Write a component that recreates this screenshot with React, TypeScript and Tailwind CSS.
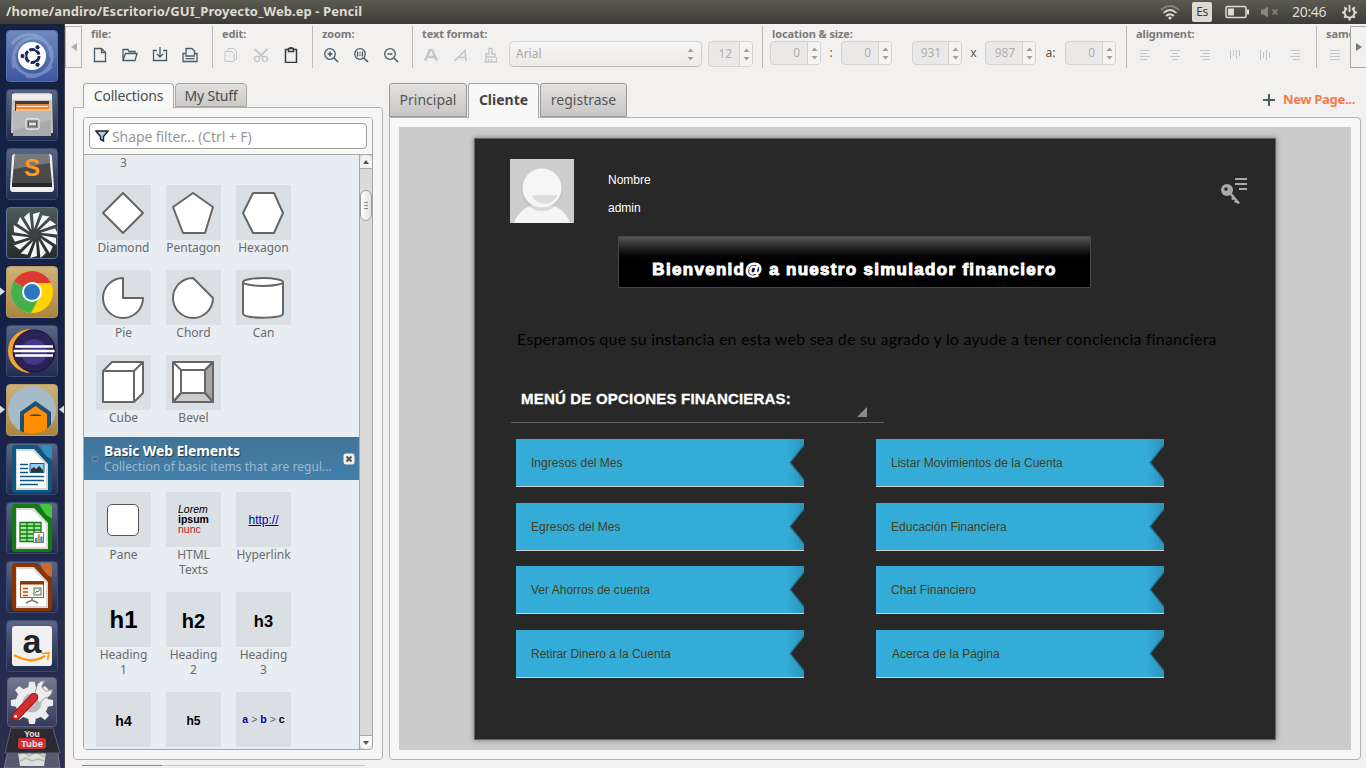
import type { ReactNode } from "react";

/* ---------- launcher ---------- */

function Tile({ tone = "dark", children }: { tone?: "dark" | "gold" | "blue" | "moss"; children: ReactNode }) {
  const tones = {
    dark: "from-[#5a6686] to-[#232c4c] border-[#3a4a73]",
    gold: "from-[#cbb27a] to-[#a9863f] border-[#b79a5d]",
    blue: "from-[#6f88bd] to-[#3d57a0] border-[#5870ad]",
    moss: "from-[#4c5c5c] to-[#262a2b] border-[#5c7593]",
  };
  return (
    <div className={"h-[52px] w-[52px] shrink-0 overflow-hidden rounded-[4px] border bg-linear-to-b " + tones[tone]}>
      <svg viewBox="1 1 50 50" className="block h-[50px] w-[50px]">{children}</svg>
    </div>
  );
}

function Office({ dark, light, children }: { dark: string; light: string; children: ReactNode }) {
  return (
    <>
      <path d="M6 5q0-3 3-3h22l15 16v29q0 3-3 3H9q-3 0-3-3z" fill={dark} />
      <path d="M10 6h18l14 15v26H10z" fill="#d8d8d8" />
      <path d="M11 8h16l13 14v23H11z" fill="#fff" />
      <path d="M34 2h9q3 0 3 3v11q-7-1-12-14z" fill={light} />
      {children}
    </>
  );
}

function Launcher() {
  const petals = Array.from({ length: 14 }, (_, i) => i * 25.7);
  const teeth = Array.from({ length: 8 }, (_, i) => i * 45);
  return (
    <nav className="relative flex h-[744px] w-[65px] shrink-0 flex-col gap-[7px] overflow-hidden border-r border-[#46414a] bg-linear-to-b from-[#16213f] via-[#15224a] to-[#2c2f4e] pl-[6px] pt-[6px]">
      <Tile tone="blue">
        <path d="M8 38C2 16 24-2 42 14M44 16c8 18-8 34-24 30M6 14C20-4 46 6 45 28M46 36C32 52 8 46 8 26" fill="none" stroke="#a9badd" strokeWidth="3" opacity=".45" />
        <circle cx="26" cy="26" r="14" fill="#fff" />
        <circle cx="26.500" cy="26" r="6.600" fill="none" stroke="#1c2b57" strokeWidth="3" strokeDasharray="12.200 1.600" />
        <g fill="#1c2b57" stroke="#fff" strokeWidth="1"><circle cx="16.500" cy="26" r="2.600" /><circle cx="31.500" cy="17.300" r="2.600" /><circle cx="31.500" cy="34.700" r="2.600" /></g>
      </Tile>
      <Tile>
        <path d="M6 6q1-2 3-2h34q2 0 3 2l1 38H5z" fill="#c9c9c8" />
        <path d="M6 5h40v6H6z" fill="#ebebea" />
        <path d="M9 12h34v14H9z" fill="#3b3b3b" />
        <path d="M10 15h33v12H10z" fill="#ee8536" /><path d="M11 17.500h31M10 21h33" stroke="#fff0dc" strokeWidth="1" />
        <path d="M7 22h38v25H7z" fill="#a9aaab" /><path d="M7 22h38v9L7 41z" fill="#b8b9ba" />
        <rect x="20" y="30" width="13" height="10" rx="2" fill="#8d8e8f" stroke="#e7e7e7" strokeWidth="1.300" />
        <rect x="22.500" y="33" width="8" height="4" fill="#e1e1e1" stroke="#555" />
      </Tile>
      <Tile>
        <path d="M6 9q0-3 3-3h34q3 0 3 3l2 31q0 4-3 4H7q-3 0-3-4z" fill="#eee" />
        <path d="M9 6h34l3 29H6z" fill="#4a4a4b" />
        <path d="M6 35h40v4H6z" fill="#262626" />
        <path d="M9 6h34l1 9-36 6z" fill="#77787a" />
        <text x="26" y="28" textAnchor="middle" fontFamily="Liberation Sans" fontWeight="700" fontSize="24" fill="#ff9820">S</text>
      </Tile>
      <Tile tone="moss">
        {petals.map((a) => (
          <path key={a} transform={"rotate(" + a + " 29 28)"} d="M28 22L27 7l7-2z" fill="#f6f6f6" />
        ))}
        <circle cx="29" cy="28" r="4.500" fill="#3d4343" />
      </Tile>
      <Tile tone="gold">
        <circle cx="26" cy="26" r="21" fill="#ffd400" />
        <path d="M26 26L7.800 15.500A21 21 0 0 1 45 17H26z" fill="#dd3a31" />
        <path d="M7.800 15.500A21 21 0 0 0 25 47l9-17-8-4z" fill="#43b04a" />
        <circle cx="26" cy="26" r="10" fill="#fff" /><circle cx="26" cy="26" r="8" fill="#2f77bd" />
      </Tile>
      <Tile>
        <path d="M24 4A22 22 0 0 0 24 48A25 25 0 0 1 24 4z" fill="#f6a233" />
        <circle cx="28" cy="26" r="21" fill="#2b2258" stroke="#15152c" />
        <circle cx="28" cy="27" r="13" fill="#443787" />
        <path d="M9 21.500h38M7.500 26h41M9 30.500h38" stroke="#fff" strokeWidth="2.400" />
      </Tile>
      <Tile tone="gold">
        <clipPath id="pencil-disc"><circle cx="26" cy="26" r="24" /></clipPath>
        <circle cx="26" cy="26" r="24" fill="#a6bac7" />
        <g clipPath="url(#pencil-disc)">
          <path d="M14 52V28l15.500-11L45 28v24z" fill="#1f4f71" />
          <path d="M18 52V30l11.500-8L41 30v22z" fill="#ff8f00" />
          <path d="M24 31q5.500-1.500 11 0v.9H24z" fill="#1f4f71" />
        </g>
      </Tile>
      <Tile>
        <Office dark="#0f5780" light="#2f8dbf">
          <path d="M14 21.500h8M14 25.500h8M14 29.500h8M14 33.500h24M14 37.500h24M14 41.500h18" stroke="#0f5780" strokeWidth="1.700" />
          <path d="M24 20.500h14v9H24z" fill="#8fd0f5" stroke="#0f5780" /><path d="M25 29v-3l3-2 2 2 3-3 4 4v2z" fill="#333" />
        </Office>
      </Tile>
      <Tile>
        <Office dark="#127c12" light="#46c43c">
          <path d="M14 20.500h21v19H14z" fill="#a5e59c" /><path d="M14 20.500h21v19H14zM14 24h21M14 28h21M14 32h21M14 36h21M21 20.500v19M28 20.500v19" fill="none" stroke="#127c12" strokeWidth="1.300" />
          <rect x="27.500" y="30.500" width="10" height="10" fill="#fff" stroke="#777" /><path d="M29 36h2.300v4H29z" fill="#2c8fd0" /><path d="M31.600 32.500h2.300V40h-2.300z" fill="#ef8a20" /><path d="M34.300 34.500h2.300V40h-2.300z" fill="#2c8fd0" />
        </Office>
      </Tile>
      <Tile>
        <Office dark="#8a3305" light="#c86a34">
          <rect x="14.500" y="20.500" width="23" height="16" fill="#fff6ee" stroke="#b25020" /><path d="M14 22h24" stroke="#8a3305" strokeWidth="3" />
          <path d="M17 27.500h5M17 31h5M17 34.500h5" stroke="#b25020" strokeWidth="1.600" /><rect x="28" y="27" width="7" height="7" fill="#e7ffe4" stroke="#666" /><path d="M29 32l2-2 1 1 2-3" fill="none" stroke="#2ba22b" />
          <path d="M26 37v3M20 42l6-3 6 3" fill="none" stroke="#777" strokeWidth="1.500" />
        </Office>
      </Tile>
      <Tile>
        <rect x="6" y="6" width="40" height="40" rx="3" fill="#f0f0f0" />
        <text x="26" y="33" textAnchor="middle" fontFamily="Liberation Sans" fontWeight="700" fontSize="34" fill="#222">a</text>
        <path d="M8 35q17 10 31 1" fill="none" stroke="#ff9a12" strokeWidth="2.600" /><path d="M36 33.500l7-.5-1.500 7" fill="none" stroke="#ff9a12" strokeWidth="1.700" />
      </Tile>
      <div className="-mt-[2px] ml-px h-[50px] w-[50px] shrink-0 rounded-[4px] border border-[#596180] bg-linear-to-b from-[#747b93] to-[#343a58]">
        <svg viewBox="0 0 50 50" className="block h-[48px] w-[48px]">
          <g fill="#ececec"><circle cx="25" cy="26" r="17" />
            {teeth.map((a) => <path key={a} transform={"rotate(" + a + " 25 26)"} d="M21 10l1-6h6l1 6z" />)}
          </g>
          <circle cx="25" cy="26" r="10" fill="#b9bac0" />
          <path d="M31 16L35 20" stroke="#ddd" strokeWidth="8" />
          <path d="M30 9q1-6 8-6l-3 6 4 5 7-2q0 8-8 9l-5 5-6-6z" fill="#eee" stroke="#999" />
          <path d="M8 40L27 20" stroke="#8f1518" strokeWidth="9" strokeLinecap="round" /><path d="M8 40L27 20" stroke="#d42d30" strokeWidth="7" strokeLinecap="round" /><circle cx="8" cy="40" r="1.500" fill="#fff" />
        </svg>
      </div>
      <svg viewBox="0 0 65 48" className="absolute bottom-0 left-0 h-12 w-[65px]">
        <path d="M9 27h48l3 21H4z" fill="#565a70" stroke="#747a92" />
        <path d="M18 32h28l-2 14H20z" fill="#e0e0dc" /><path d="M18 35l6-3 5 4 7-4 9 5M20 41l6-3 6 3 6-2 7 2" fill="none" stroke="#b5b5b1" strokeWidth="1.500" />
        <path d="M11 8h42l7 25H5z" fill="#2c2a31" stroke="#5e5f6d" />
        <rect x="18" y="18" width="28" height="11" rx="3" fill="#cf3035" />
        <text x="32" y="17" textAnchor="middle" fontFamily="Liberation Sans" fontWeight="700" fontSize="8.500" fill="#e8e8e8">You</text>
        <text x="32" y="27" textAnchor="middle" fontFamily="Liberation Sans" fontWeight="700" fontSize="9.500" fill="#f1e4e4">Tube</text>
      </svg>
      <svg viewBox="0 0 65 744" className="absolute inset-0 h-[744px] w-[65px]" fill="#dcdcdc">
        <path d="M0 263.500l5 4-5 4zM0 381.500l5 4-5 4zM64 381.500l-5 4 5 4z" />
      </svg>
    </nav>
  );
}

/* ---------- top panel ---------- */

function TitleBar() {
  return (
    <header className="flex h-6 items-center bg-linear-to-b from-[#5c5b50] to-[#3c3b37] pl-[6px] pr-[8px] text-[#dfdbd2]">
      <div className="text-[13px] font-bold tracking-[0.08px]">/home/andiro/Escritorio/GUI_Proyecto_Web.ep - Pencil</div>
      <svg className="ml-auto h-4 w-5" viewBox="0 0 20 16" fill="none" strokeWidth="1.700">
        <path d="M1 6q9-8 18 0" stroke="#858379" /><path d="M3.500 9q6.500-6 13 0M6 12q4-3.500 8 0" stroke="#dfdbd2" /><circle cx="10" cy="14" r="1.600" fill="#dfdbd2" />
      </svg>
      <div className="ml-[12px] flex h-5 w-5 items-center justify-center rounded-[2px] bg-[#dfdbd2] text-[12px] tracking-[-0.5px] text-[#3c3b37]">Es</div>
      <svg className="ml-[13px] h-4 w-6" viewBox="0 0 24 16"><rect x="1" y="2.500" width="20" height="11" rx="1.500" fill="none" stroke="#dfdbd2" strokeWidth="1.500" /><path d="M3 4.500h6v7H3z" fill="#dfdbd2" /><path d="M22 5.500h2v5h-2z" fill="#dfdbd2" /></svg>
      <svg className="ml-[12px] h-4 w-[18px]" viewBox="0 0 18 16"><path d="M0 5.500h2.500L7 2.500v11L2.500 10.500H0z" fill="#88867d" /><path d="M11.500 5.500l5 5M16.500 5.500l-5 5" stroke="#88867d" strokeWidth="1.700" /></svg>
      <div className="ml-[13px] w-[37px] text-[14px] leading-6 tracking-[-0.3px]">20:46</div>
      <svg className="ml-[12px] h-[17px] w-[17px]" viewBox="0 0 17 17" fill="none" stroke="#dfdbd2">
        <path d="M8.500 1v7" strokeWidth="1.800" /><path d="M6 4.300a5 5 0 1 0 5 0" strokeWidth="2" />
        <path d="M1 8.500h2.500M13.500 8.500H16M3.200 3.200l1.700 1.700M13.800 3.200l-1.700 1.700M3.200 13.800l1.700-1.700M13.800 13.800l-1.700-1.700M8.500 14v2.500" strokeWidth="2" />
      </svg>
    </header>
  );
}

/* ---------- toolbar ---------- */

function Group({ label, className, children }: { label: string; className: string; children: ReactNode }) {
  return (
    <section className={"h-[42px] shrink-0 overflow-hidden border-r border-[#bdbbb7] pl-[9px] " + className}>
      <h2 className="h-[15px] whitespace-nowrap text-[11px] font-bold leading-[15px] tracking-[-0.1px] text-[#7d7b79]">{label}</h2>
      <div className="flex h-[27px] items-start">{children}</div>
    </section>
  );
}

function Ico({ off, children }: { off?: boolean; children: ReactNode }) {
  return (
    <span className="flex h-[27px] w-[30px] shrink-0 items-center pl-px">
      <svg viewBox="0 0 16 16" className={"h-4 w-4 " + (off ? "text-[#c3c5c6]" : "text-[#4b5b63]")} fill="none" stroke="currentColor" strokeWidth="1.300">{children}</svg>
    </span>
  );
}

function Arrows() {
  return <svg viewBox="0 0 7 13" className="h-[13px] w-[7px]" fill="#a09f9d"><path d="M.5 4L3.500.5l3 3.500zM.5 9h6l-3 3.500z" /></svg>;
}

function Spin({ value, className, tall }: { value: string; className: string; tall?: boolean }) {
  return (
    <div className={"flex shrink-0 overflow-hidden rounded-[4px] border border-[#d4d2d0] bg-[#eae9e8] text-[12px] tracking-[-0.1px] text-[#b0aeac] " + (tall ? "h-[26px] " : "h-6 ") + className}>
      <span className="flex flex-1 items-center justify-end pr-[7px]">{value}</span>
      <span className="flex w-[13px] items-center justify-center border-l border-[#d4d2d0] bg-[#f5f4f3]"><Arrows /></span>
    </div>
  );
}

function Toolbar() {
  const rows = (d: string) => <path d={d} strokeWidth="1" />;
  return (
    <div className="flex h-[54px] overflow-hidden pt-[2px]">
      <div className="flex h-[42px] w-[17px] shrink-0 items-center justify-center border border-[#b5b3b0]"><svg viewBox="0 0 6 8" className="h-2 w-[6px]" fill="#b0aeac"><path d="M6 0v8L0 4z" /></svg></div>
      <Group label="file:" className="w-[131px]">
        <Ico><path d="M2.500 1.500h7l4 4v9h-11zM9.500 1.500v4h4" /></Ico>
        <Ico><path d="M1 13.500V2.500h5l1 2h6v2M1 13.500l2.500-7H15l-2 7z" /></Ico>
        <Ico><path d="M5 3.500H1.500v10h13v-10H11M8 0v10M5 7l3 3 3-3" /></Ico>
        <Ico><path d="M4 8V1.500h6l2.500 2.500v4M3 6.500H1v8h14v-8h-2M3 9h10M3.500 11.700h9" /></Ico>
      </Group>
      <Group label="edit:" className="w-[100px]">
        <Ico off><path d="M2 4.500h7l2 2v8H2zM5 4V1.500h6l2.500 3v8h-2" strokeWidth="1" /></Ico>
        <Ico off><circle cx="4" cy="12" r="2.600" /><circle cx="12" cy="12" r="2.600" /><path d="M1.500 2L10 10M14.500 2L6 10" strokeWidth="1.800" /></Ico>
        <Ico><path d="M5 2.500H2.500v13h11v-13H11M5.500 1.500h5v3h-5zM6.500 0h3" strokeWidth="1.500" stroke="#333b40" /></Ico>
      </Group>
      <Group label="zoom:" className="w-[100px]">
        <Ico><circle cx="7" cy="7" r="5.300" /><path d="M11 11l4 4M4.500 7h5M7 4.500v5" strokeWidth="1.600" /></Ico>
        <Ico><circle cx="7" cy="7" r="5.300" /><path d="M11 11l4 4" strokeWidth="1.600" /><path d="M4.500 4.500v5M9.500 4.500v5M7 5v1.500M7 7.500V9" strokeWidth="1.300" /></Ico>
        <Ico><circle cx="7" cy="7" r="5.300" /><path d="M11 11l4 4M4.500 7h5" strokeWidth="1.600" /></Ico>
      </Group>
      <Group label="text format:" className="w-[350px]">
        <Ico off><path d="M2 13.500L7 3h2l5 10.500M4 10h8" strokeWidth="2.400" /></Ico>
        <Ico off><path d="M1.500 14L12 3.500l1 10.500M4.500 10.500h8" strokeWidth="1.500" /></Ico>
        <Ico off><path d="M6 7V1.500h3V7h3v3H3V7zM3.500 10L2 15h11.500V10M5.500 12v2.500M8.500 12v2.500" strokeWidth="1.300" /></Ico>
        <div className="-ml-[3px] flex h-[26px] w-[193px] items-center rounded-[5px] border border-[#d2d0ce] border-b-[#bdbbb8] bg-linear-to-b from-[#f7f6f6] to-[#ecebea] pl-[6px] pr-[7px] text-[12px] text-[#aaa8a6]">Arial<span className="ml-auto"><Arrows /></span></div>
        <Spin value="12" className="ml-[6px] w-[45px]" tall />
      </Group>
      <Group label="location &amp; size:" className="w-[364px]">
        <div className="-ml-[2px] flex text-[12px] leading-6 text-[#55534f]">
          <Spin value="0" className="w-[51px]" /><span className="w-5 text-center">:</span>
          <Spin value="0" className="w-[51px]" /><span className="w-5" />
          <Spin value="931" className="w-[50px]" /><span className="w-[23px] text-center">x</span>
          <Spin value="987" className="w-[51px]" /><span className="w-[29px] text-center">a:</span>
          <Spin value="0" className="w-[51px]" />
        </div>
      </Group>
      <Group label="alignment:" className="w-[190px]">
        <Ico off>{rows("M3 3.500h10M3 6.500h7M3 9.500h10M3 12.500h7")}</Ico>
        <Ico off>{rows("M3 3.500h10M5 6.500h6M3 9.500h10M5 12.500h6")}</Ico>
        <Ico off>{rows("M3 3.500h10M6 6.500h7M3 9.500h10M6 12.500h7")}</Ico>
        <Ico off>{rows("M3.500 3v9M6.500 3v6M9.500 3v9M12.500 3v6")}</Ico>
        <Ico off>{rows("M3.500 3v10M6.500 5v6M9.500 3v10M12.500 5v6")}</Ico>
        <Ico off>{rows("M3 3.500h10M6 6.500h7M3 9.500h10M6 12.500h7")}</Ico>
      </Group>
      <Group label="same" className="w-[33px] border-r-0">
        <Ico off>{rows("M3 3.500h10M3 6.500h10M3 9.500h10M3 12.500h10")}</Ico>
      </Group>
      <div className="flex h-[42px] w-[17px] shrink-0 items-center justify-center border border-[#a9a7a4]"><svg viewBox="0 0 6 8" className="h-2 w-[6px]" fill="#777"><path d="M0 0v8l6-4z" /></svg></div>
    </div>
  );
}

/* ---------- shape collections ---------- */

function Item({ label, children }: { label: string; children: ReactNode }) {
  return (
    <div className="w-[55px]">
      <div className="h-[55px] w-[55px] bg-[#dadfe3]">{children}</div>
      <div className="-mx-2 whitespace-pre-line text-center text-[12px] leading-[15px] text-[#6b6b6b]">{label}</div>
    </div>
  );
}

function Shape({ children }: { children: ReactNode }) {
  return <svg viewBox="0 0 55 55" className="block h-[55px] w-[55px]" fill="#fff" stroke="#666" strokeWidth="2" strokeLinejoin="round">{children}</svg>;
}

function Heading({ text, className }: { text: string; className: string }) {
  return <div className={"flex h-[55px] items-center justify-center font-['Liberation_Sans',sans-serif] font-bold text-black " + className}>{text}</div>;
}

function Collections() {
  return (
    <aside className="ml-[8px] flex w-[310px] shrink-0 flex-col">
      <div className="z-10 -mb-px flex items-end gap-px pl-[10px] pt-[5px] text-[14px] text-[#4c4c4c]">
        <div className="flex h-[25px] w-[91px] justify-center rounded-t-[4px] border border-b-0 border-[#a9a7a3] bg-[#f8f8f8] leading-[23px] tracking-[-0.2px]">Collections</div>
        <div className="mb-px flex h-6 w-[72px] justify-center rounded-t-[4px] border border-[#a9a7a3] bg-linear-to-b from-[#e2e1e0] to-[#cbc9c7] leading-[23px] tracking-[-0.2px]">My Stuff</div>
      </div>
      <div className="h-[653px] rounded-[4px] rounded-tl-none border border-[#b4b2ae] bg-[#f6f6f6] p-[9px]">
        <div className="h-[633px] overflow-hidden rounded-[4px] border border-[#a9a7a3]">
          <div className="h-[37px] border-b border-[#a9a7a3] bg-[#f8f8f7] p-[5px]">
            <div className="flex h-[26px] w-[278px] items-center rounded-[4px] border border-[#9f9d99] bg-white pl-[5px] text-[14px] tracking-[-0.1px] text-[#9a9896]">
              <svg viewBox="0 0 14 12" className="mr-[3px] h-3 w-[14px]" fill="#b4c8e8" stroke="#222" strokeWidth="1.400"><path d="M1 1h12L8.500 6.500V11l-3-1.500v-3z" /></svg>
              Shape filter... (Ctrl + F)
            </div>
          </div>
          <div className="flex h-[594px]">
            <div className="w-[275px] overflow-hidden bg-[#e8edf1]">
              <div className="h-[282px] pl-[12px]">
                <div className="h-[30px] w-[55px] text-center text-[12px] leading-[15px] text-[#6b6b6b]">3</div>
                <div className="grid w-[195px] grid-cols-3 gap-[15px]">
                  <Item label="Diamond"><Shape><path d="M27 8l20 20-20 20L7 28z" /></Shape></Item>
                  <Item label="Pentagon"><Shape><path d="M27 8l20 14-8 26H17L7 22z" /></Shape></Item>
                  <Item label="Hexagon"><Shape><path d="M17 8h21l9 20-9 20H17L7 28z" /></Shape></Item>
                  <Item label="Pie"><Shape><path d="M27 8v20h20A20 20 0 1 1 27 8z" /></Shape></Item>
                  <Item label="Chord"><Shape><path d="M27 8l20 20A20 20 0 1 1 27 8z" /></Shape></Item>
                  <Item label="Can"><Shape><path d="M7 12v32c2 5 38 5 40 0V12" /><ellipse cx="27" cy="12" rx="20" ry="4" /></Shape></Item>
                  <Item label="Cube"><Shape><path d="M7 16l9-9h31v31l-9 9H7zM7 16h31v31M38 16l9-9" /></Shape></Item>
                  <Item label="Bevel"><Shape><path d="M7 7h40v40H7z" /><path d="M47 7v40l-8-9V15z" fill="#a5a5a5" /><path d="M7 47h40l-8-9H15z" fill="#cbcbcb" /><path d="M15 15h24v23H15zM7 7l8 8M47 7l-8 8M7 47l8-9" /></Shape></Item>
                </div>
              </div>
              <div className="flex h-[43px] items-center bg-linear-to-b from-[#437498] to-[#4180aa] pl-[7px] pr-[3px]">
                <svg viewBox="0 0 8 8" className="h-2 w-2"><path d="M.5.5h7v7h-7z" fill="#5c86a8" stroke="#5572ad" /><path d="M2 4h4" stroke="#2c3c52" /></svg>
                <div className="ml-[5px] w-[234px]">
                  <div className="text-[14px] font-bold leading-[16px] tracking-[-0.15px] text-white [text-shadow:1px_1px_1px_#24394a]">Basic Web Elements</div>
                  <div className="overflow-hidden whitespace-nowrap text-[12px] leading-[15px] tracking-[0.05px] text-[#9fb9cd]">Collection of basic items that are regul...</div>
                </div>
                <svg viewBox="0 0 12 12" className="ml-[5px] h-3 w-3"><rect x=".5" y=".5" width="11" height="11" rx="2.500" fill="#f3f1e8" /><path d="M3.500 3.500l5 5M8.500 3.500l-5 5" stroke="#555" strokeWidth="2" /></svg>
              </div>
              <div className="grid w-[219px] grid-cols-3 gap-[15px] px-[12px] pt-[12px]">
                <Item label="Pane"><div className="flex h-[55px] items-center justify-center"><div className="mr-px h-8 w-8 rounded-[5px] border border-[#555] bg-white" /></div></Item>
                <Item label={"HTML\nTexts"}><div className="pl-[12px] pt-[12px] font-['Liberation_Sans',sans-serif] text-[10.500px] leading-[10px] text-black"><i>Lorem</i><br /><b>ipsum</b><br /><span className="text-[#c01818]">nunc</span></div></Item>
                <Item label="Hyperlink"><div className="flex h-[55px] items-center justify-center font-['Liberation_Sans',sans-serif] text-[12px] text-[#0000b0] underline">http://</div></Item>
                <Item label={"Heading\n1"}><Heading text="h1" className="text-[24px]" /></Item>
                <Item label={"Heading\n2"}><Heading text="h2" className="pt-[3px] text-[20px]" /></Item>
                <Item label={"Heading\n3"}><Heading text="h3" className="pt-[3px] text-[16.500px]" /></Item>
                <Item label=""><Heading text="h4" className="pt-[3px] text-[14px]" /></Item>
                <Item label=""><Heading text="h5" className="pt-[3px] text-[12px]" /></Item>
                <Item label=""><div className="flex h-[55px] items-center justify-center gap-[3px] font-['Liberation_Sans',sans-serif] text-[10.500px] font-bold text-black"><span className="text-[#0000a0]">a</span><span className="font-normal text-[#666]">&gt;</span><span className="text-[#0000a0]">b</span><span className="font-normal text-[#666]">&gt;</span><span>c</span></div></Item>
              </div>
            </div>
            <div className="flex w-[13px] flex-col border-l border-[#a9a7a3] bg-[#dcdad8]">
              <div className="flex h-[14px] items-center justify-center rounded-t-[6px] border-b border-[#a9a7a3] bg-[#f4f3f2]"><svg viewBox="0 0 6 4" className="h-1 w-[6px]" fill="#555"><path d="M0 4l3-4 3 4z" /></svg></div>
              <div className="mt-[21px] flex h-[31px] flex-col items-center justify-center gap-[2px] rounded-[6px] border border-[#9f9d99] bg-linear-to-r from-white to-[#e3e2e0]"><i className="h-px w-1 bg-[#888]" /><i className="h-px w-1 bg-[#888]" /><i className="h-px w-1 bg-[#888]" /></div>
              <div className="mt-auto flex h-[14px] items-center justify-center rounded-b-[6px] border-t border-[#a9a7a3] bg-[#f8f7f7]"><svg viewBox="0 0 6 4" className="h-1 w-[6px]" fill="#555"><path d="M0 0h6L3 4z" /></svg></div>
            </div>
          </div>
        </div>
      </div>
      <div className="ml-[9px] mt-[5px] flex h-px w-[283px] bg-[#c9c7c4]"><div className="h-px w-[80px] bg-[#8b8987]" /></div>
    </aside>
  );
}

/* ---------- drawing canvas ---------- */

function Ribbon({ text, className }: { text: string; className: string }) {
  return (
    <div className="flex h-12 w-[288px]">
      <div className="relative h-12 w-[288px]">
        <svg viewBox="0 0 288 48" className="absolute inset-0 h-12 w-[288px]">
          <defs><linearGradient id="fold"><stop offset=".94" stopColor="#34acd8" /><stop offset="1" stopColor="#2c94bb" /></linearGradient></defs>
          <path d="M0 0h288v6l-14 17.500L288 41v6H0z" fill="url(#fold)" />
          <path d="M288 6l-14 17.500L288 41" fill="none" stroke="#23799a" strokeWidth="1.600" opacity=".75" />
          <path d="M0 47.500h288" stroke="#d0d0cc" />
        </svg>
        <div className={"relative h-12 pl-[15px] font-['Liberation_Sans',sans-serif] text-[12px] leading-[48px] text-[#46401a] " + className}>{text}</div>
      </div>
    </div>
  );
}

function Page() {
  return (
    <div className="relative ml-[75px] mt-[11px] h-[602px] w-[802px] border border-[#666] bg-[#282828] font-['Liberation_Sans',sans-serif] text-white shadow-[0_0_5px_#777]">
      <svg viewBox="0 0 64 64" className="absolute left-[35px] top-[20px] h-16 w-16">
        <path d="M0 0h64v64H0z" fill="#cdcdcd" />
        <path d="M4 64Q11 45 32 45T60 64z" fill="#f5f5f5" />
        <circle cx="32" cy="31" r="21" fill="#bbb" opacity=".45" />
        <circle cx="32" cy="29" r="19.500" fill="#f6f6f6" />
        <path d="M21.500 36h26q-4 9-13 9t-13-9z" fill="#dedede" />
      </svg>
      <div className="absolute left-[133px] top-[33px] text-[12px] leading-4">Nombre</div>
      <div className="absolute left-[133px] top-[61px] text-[12px] leading-4">admin</div>
      <svg viewBox="0 0 28 30" className="absolute left-[745px] top-[37px] h-[30px] w-7" fill="none" stroke="#a9a9a9">
        <path d="M15 3h12M15 8h12M19 13h8" strokeWidth="2.200" />
        <circle cx="7" cy="14" r="6" fill="#a9a9a9" stroke="none" /><circle cx="6" cy="13" r="1.800" fill="#282828" stroke="none" />
        <path d="M10 17l9 10.500M14 21l-2 2.500M17 24l-2 2.500" strokeWidth="2.600" />
      </svg>
      <div className="absolute left-[143px] top-[97px] h-[52px] w-[473px] rounded-[1px] border border-[#46464a] bg-linear-to-b from-[#575757] to-black to-50% pt-[21px] text-center">
        <div className="whitespace-nowrap text-[17px] font-bold leading-[24px] tracking-[1.300px] [-webkit-text-stroke:1px_white]">Bienvenid@ a nuestro simulador financiero</div>
      </div>
      <div className="absolute left-[42px] top-[188px] whitespace-nowrap font-['Lato',sans-serif] text-[16px] leading-6 tracking-[0.200px] text-black">Esperamos que su instancia en esta web sea de su agrado y lo ayude a tener conciencia financiera</div>
      <div className="absolute left-[36px] top-[249px] h-[35px] w-[373px] border-b border-[#606060] pl-[10px] text-[15px] font-bold leading-[21px] tracking-[0.200px] [-webkit-text-stroke:0.3px_white]">MENÚ DE OPCIONES FINANCIERAS:
        <svg viewBox="0 0 10 10" className="absolute left-[346px] top-[19px] h-[10px] w-[10px]"><path d="M10 0v10H0z" fill="#8a8a8a" /></svg>
      </div>
      <div className="grid grid-cols-[288px_288px] gap-x-[72px] gap-y-[15.670px] pl-[41px] pt-[300px]">
        <Ribbon text="Ingresos del Mes" className="tracking-[0.010px]" />
        <Ribbon text="Listar Movimientos de la Cuenta" className="tracking-[0.010px]" />
        <Ribbon text="Egresos del Mes" className="tracking-[0.010px]" />
        <Ribbon text="Educación Financiera" className="tracking-[0.010px]" />
        <Ribbon text="Ver Ahorros de cuenta" className="tracking-[0.010px]" />
        <Ribbon text="Chat Financiero" className="tracking-[0.010px]" />
        <Ribbon text="Retirar Dinero a la Cuenta" className="tracking-[0.010px]" />
        <Ribbon text="Acerca de la Página" className="pl-[16px] tracking-[0.010px]" />
      </div>
    </div>
  );
}

function Workspace() {
  return (
    <main className="ml-[6px] flex w-[972px] shrink-0 flex-col">
      <div className="z-10 flex h-[39px] items-end gap-px text-[14px] text-[#555]">
        <div className="h-[34px] w-[78px] rounded-t-[3px] border border-[#9a9896] bg-linear-to-b from-[#e2e1e0] to-[#c9c7c5] text-center leading-[32px]">Principal</div>
        <div className="-mb-px h-[35px] w-[71px] rounded-t-[3px] border border-b-0 border-[#a9a7a3] bg-[#f8f8f8] text-center font-bold leading-[32px] text-[#444]">Cliente</div>
        <div className="h-[34px] w-[87px] rounded-t-[3px] border border-[#9a9896] bg-linear-to-b from-[#e2e1e0] to-[#c9c7c5] text-center leading-[32px]">registrase</div>
        <div className="ml-auto flex h-[34px] items-center gap-[8px] pr-[6px] text-[13px] font-bold tracking-[-0.300px] text-[#f47a4b]">
          <svg viewBox="0 0 12 12" className="h-3 w-3"><path d="M6 0v12M0 6h12" stroke="#4b5b63" strokeWidth="2" /></svg>New Page...
        </div>
      </div>
      <div className="h-[643px] rounded-[4px] rounded-tl-none border border-[#b4b2ae] bg-[#f7f7f7] p-[9px]">
        <div className="flex h-[623px] w-[952px] overflow-hidden bg-[#cbcbcb]"><Page /></div>
      </div>
    </main>
  );
}

export default function App() {
  return (
    <div className="h-[768px] w-[1366px] overflow-hidden bg-[#f2f1f0] font-['Noto_Sans',sans-serif]">
      <TitleBar />
      <div className="flex">
        <Launcher />
        <div className="h-[744px] w-[1301px] overflow-hidden">
          <Toolbar />
          <div className="flex">
            <Collections />
            <Workspace />
          </div>
        </div>
      </div>
    </div>
  );
}
